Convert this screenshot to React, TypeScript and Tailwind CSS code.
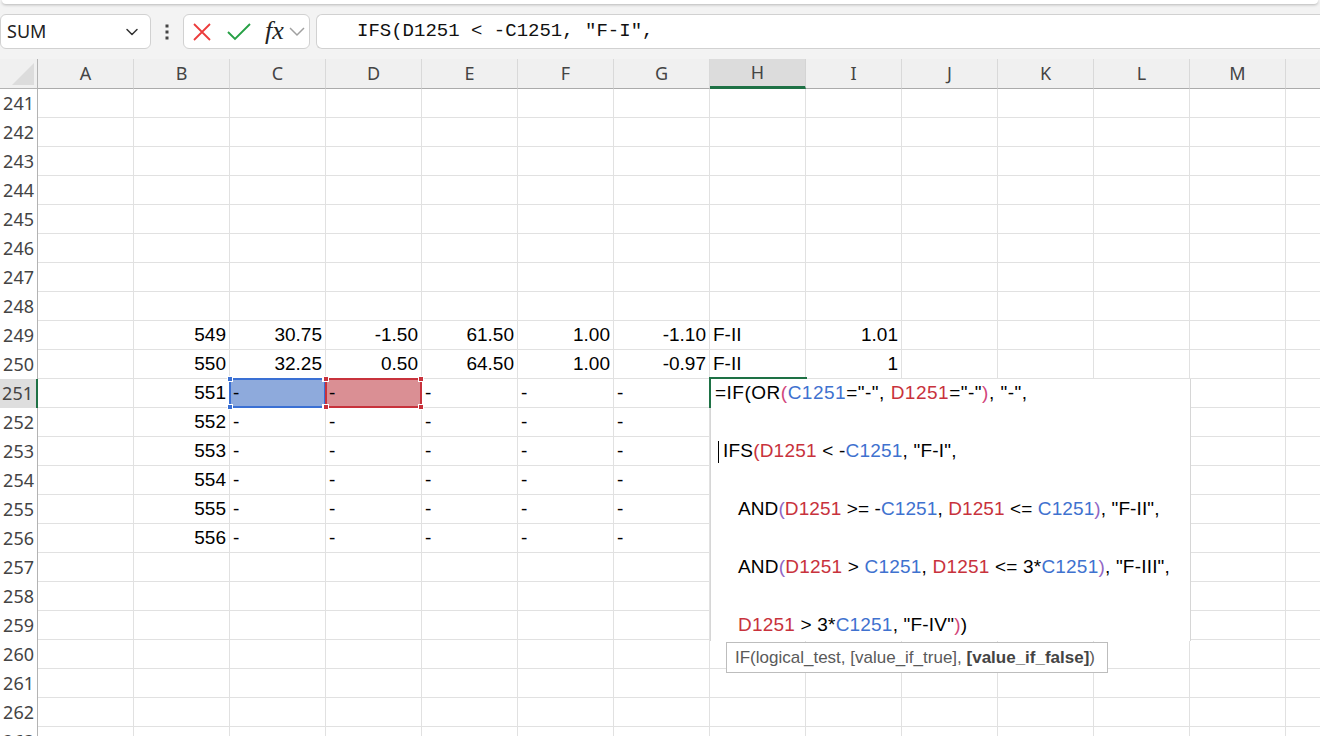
import { ChevronDown } from 'lucide-react';

const COLS = ['A', 'B', 'C', 'D', 'E', 'F', 'G', 'H', 'I', 'J', 'K', 'L', 'M', 'N'];
const ROWS = Array.from({ length: 23 }, (_, i) => 241 + i);

const numCols = ['B', 'C', 'D', 'E', 'F', 'G', 'I'];

const data: Record<number, Record<string, string>> = {
  249: { B: '549', C: '30.75', D: '-1.50', E: '61.50', F: '1.00', G: '-1.10', H: 'F-II', I: '1.01' },
  250: { B: '550', C: '32.25', D: '0.50', E: '64.50', F: '1.00', G: '-0.97', H: 'F-II', I: '1' },
};
for (let r = 251; r <= 256; r++) {
  data[r] = { B: String(300 + r), C: '-', D: '-', E: '-', F: '-', G: '-' };
}

const cellFont = "font-['Liberation_Sans',Arial,sans-serif] text-[19px] text-black";
const headFont = "font-['Noto_Sans',sans-serif] text-[18px] text-[#444]";

// reference colours used by the in-cell editor
const Cref = ({ children }: { children: React.ReactNode }) => <span className="text-[#3f72cf]">{children}</span>;
const Dref = ({ children }: { children: React.ReactNode }) => <span className="text-[#c8323c]">{children}</span>;
const Pk = ({ children }: { children: React.ReactNode }) => <span className="text-[#d2457a]">{children}</span>;
const Pu = ({ children }: { children: React.ReactNode }) => <span className="text-[#9267c4]">{children}</span>;

function Handles({ color }: { color: string }) {
  const base = `absolute w-[6px] h-[6px] ${color} border border-white`;
  return (
    <>
      <span className={`${base} -left-[4px] -top-[4px]`} />
      <span className={`${base} -right-[4px] -top-[4px]`} />
      <span className={`${base} -left-[4px] -bottom-[4px]`} />
      <span className={`${base} -right-[4px] -bottom-[4px]`} />
    </>
  );
}

function Cell({ row, col }: { row: number; col: string }) {
  const value = data[row]?.[col] ?? '';
  const isNum = numCols.includes(col) && value !== '-' && value !== '';
  const selC = row === 251 && col === 'C';
  const selD = row === 251 && col === 'D';

  return (
    <div
      className={`relative h-[29px] border-r border-b border-[#e1e1e1] flex items-center overflow-visible whitespace-nowrap ${cellFont} ${
        isNum ? 'justify-end pr-[3px]' : 'justify-start pl-[3px]'
      }`}
    >
      {selC && (
        <div className="absolute -left-[1px] -top-[1px] w-[97px] h-[30px] bg-[#8eaadc] border-2 border-[#3a70d4] z-10 flex items-center pl-[2px]">
          <span>-</span>
          <Handles color="bg-[#3a70d4]" />
        </div>
      )}
      {selD && (
        <div className="absolute -left-[1px] -top-[1px] w-[97px] h-[30px] bg-[#da8f94] border-2 border-[#c8323c] z-10 flex items-center pl-[2px]">
          <span>-</span>
          <Handles color="bg-[#c8323c]" />
        </div>
      )}
      {!selC && !selD && value}
    </div>
  );
}

export default function App() {
  return (
    <div className="w-[1320px] h-[736px] overflow-hidden bg-[#f3f3f3] relative">
      {/* ribbon edge */}
      <div className="h-[4px] mx-[2px] bg-white rounded-b-[6px] shadow-[0_1px_3px_rgba(0,0,0,0.25)]" />

      {/* Formula bar */}
      <div className="h-[55px] flex items-start pt-[10px]">
        <div className="w-[151px] h-[35px] bg-white border border-[#d1d1d1] rounded-[6px] flex items-center justify-between pl-[6px] pr-[8px]">
          <span className="font-['Noto_Sans',sans-serif] text-[18px] text-[#222]">SUM</span>
          <ChevronDown size={20} strokeWidth={1.8} className="text-[#333]" />
        </div>
        <div className="w-[32px] h-[35px] flex items-center justify-center">
          <svg width="4" height="16" viewBox="0 0 4 16">
            <rect x="0.5" y="0.5" width="3" height="3" fill="#444" />
            <rect x="0.5" y="6.5" width="3" height="3" fill="#444" />
            <rect x="0.5" y="12.5" width="3" height="3" fill="#444" />
          </svg>
        </div>
        <div className="w-[127px] h-[35px] bg-white border border-[#d1d1d1] rounded-[6px] flex items-center pl-[8px]">
          <svg width="20" height="20" viewBox="0 0 20 20" className="mr-[15px]">
            <path d="M2 2 L18 18 M18 2 L2 18" stroke="#ec3b3b" strokeWidth="1.8" />
          </svg>
          <svg width="24" height="20" viewBox="0 0 24 20" className="mr-[14px]">
            <path d="M1 10 L8 17 L23 2" stroke="#26a045" strokeWidth="1.9" fill="none" />
          </svg>
          <span className="font-['Liberation_Serif',serif] italic text-[26px] leading-none text-[#222] -mt-[2px]">fx</span>
          <svg width="16" height="11" viewBox="0 0 16 11" className="ml-[5px]">
            <path d="M1 2 L8 9 L15 2" stroke="#a0a0a0" strokeWidth="1.5" fill="none" />
          </svg>
        </div>
        <div className="flex-1 h-[35px] ml-[6px] bg-white border-y border-l border-[#d1d1d1] rounded-l-[6px] flex items-center pl-[40px]">
          <span className="font-['Liberation_Mono',monospace] text-[19px] text-[#111] whitespace-pre">
            IFS(D1251 &lt; -C1251, "F-I",
          </span>
        </div>
      </div>

      {/* Column headers */}
      <div className="grid grid-cols-[38px_repeat(14,96px)] h-[30px] bg-[#f0f0f0]">
        <div className="relative border-r border-b border-[#b3b3b3] flex items-end justify-end p-[3px]">
          <svg width="22" height="22" viewBox="0 0 22 22">
            <path d="M22 0 L22 22 L0 22 Z" fill="#dcdcdc" />
          </svg>
        </div>
        {COLS.map((c) => (
          <div
            key={c}
            className={`flex items-center justify-center ${headFont} ${
              c === 'H'
                ? 'bg-[#dcdcdc] border-r border-r-[#d4d4d4] border-b-[3px] border-b-[#1e7145] text-[#1e7145]'
                : 'border-r border-r-[#d9d9d9] border-b border-b-[#ababab]'
            }`}
          >
            {c === 'N' ? '' : c}
          </div>
        ))}
      </div>

      {/* Sheet body */}
      <div className="relative">
        {ROWS.map((r) => (
          <div key={r} className="grid grid-cols-[38px_repeat(14,96px)] h-[29px] bg-white">
            <div
              className={`flex items-center justify-end pr-[3px] ${headFont} ${
                r === 251
                  ? 'bg-[#dedede] border-r-2 border-[#1e7145] text-[#1e7145]'
                  : 'bg-white border-r border-[#b3b3b3]'
              }`}
            >
              {r}
            </div>
            {COLS.map((c) => (
              <Cell key={c} row={r} col={c} />
            ))}
          </div>
        ))}

        {/* In-cell editor for H251 */}
        <div className={`absolute left-[710px] top-[290px] w-[481px] h-[262px] bg-white border-l border-r border-[#d6d6d6] z-20 ${cellFont}`}>
          <div className="absolute -left-[2px] -top-[2px] w-[98px] h-[2px] bg-[#1e7145]" />
          <div className="absolute -left-[2px] -top-[2px] w-[2px] h-[31px] bg-[#1e7145]" />
          <div className="h-[29px] flex items-center pl-[4px] whitespace-pre tracking-[0.5px]">
            =IF(OR<Pk>(</Pk>
            <Cref>C1251</Cref>="-", <Dref>D1251</Dref>="-"<Pk>)</Pk>, "-",
          </div>
          <div className="h-[29px]" />
          <div className="h-[29px] flex items-center pl-[7px] whitespace-pre tracking-[0.2px]">
            <span className="w-[1px] h-[22px] bg-black mr-[4px]" />
            IFS<Dref>(</Dref>
            <Dref>D1251</Dref> &lt; -<Cref>C1251</Cref>, "F-I",
          </div>
          <div className="h-[29px]" />
          <div className="h-[29px] flex items-center pl-[27px] whitespace-pre tracking-[0.1px]">
            AND<Pu>(</Pu>
            <Dref>D1251</Dref> &gt;= -<Cref>C1251</Cref>, <Dref>D1251</Dref> &lt;= <Cref>C1251</Cref>
            <Pu>)</Pu>, "F-II",
          </div>
          <div className="h-[29px]" />
          <div className="h-[29px] flex items-center pl-[27px] whitespace-pre tracking-[0.2px]">
            AND<Pu>(</Pu>
            <Dref>D1251</Dref> &gt; <Cref>C1251</Cref>, <Dref>D1251</Dref> &lt;= 3*<Cref>C1251</Cref>
            <Pu>)</Pu>, "F-III",
          </div>
          <div className="h-[29px]" />
          <div className="h-[29px] flex items-center pl-[27px] whitespace-pre tracking-[0.2px]">
            <Dref>D1251</Dref> &gt; 3*<Cref>C1251</Cref>, "F-IV"<Pk>)</Pk>
            <span>)</span>
          </div>
        </div>

        {/* Function tooltip */}
        <div className="absolute left-[726px] top-[553px] w-[382px] h-[31px] bg-white border border-[#bdbdbd] z-30 flex items-center pl-[8px] whitespace-pre font-['Liberation_Sans',Arial,sans-serif] text-[17px] text-[#5a5a5a]">
          IF(logical_test, [value_if_true], <b className="text-[#444]">[value_if_false]</b>)
        </div>
      </div>
    </div>
  );
}
